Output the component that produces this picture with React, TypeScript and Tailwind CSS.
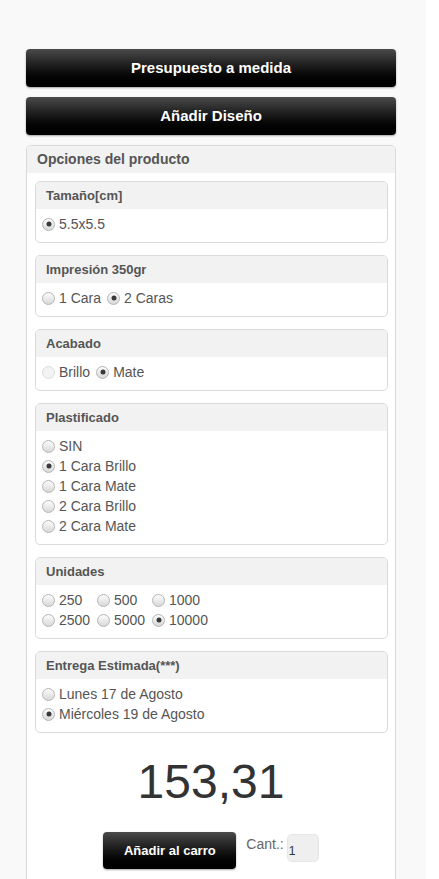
import React from "react";

type Opt = { label: string; checked?: boolean; disabled?: boolean };

function Radio({ checked, disabled }: { checked?: boolean; disabled?: boolean }) {
  return (
    <span
      className={
        "relative inline-block h-[13px] w-[13px] shrink-0 rounded-full border " +
        (disabled
          ? "border-[#dcdcdc] bg-[#f3f3f3]"
          : "border-[#b5b5b5] bg-gradient-to-b from-[#fdfdfd] to-[#d8d8d8]")
      }
    >
      {checked && (
        <span className="absolute left-1/2 top-1/2 h-[5px] w-[5px] -translate-x-1/2 -translate-y-1/2 rounded-full bg-[#3a3a3a]" />
      )}
    </span>
  );
}

function Option({ label, checked, disabled }: Opt) {
  return (
    <label className="flex h-[20px] items-center gap-[4px] text-[14px] text-[#555]">
      <Radio checked={checked} disabled={disabled} />
      <span>{label}</span>
    </label>
  );
}

function Box({ title, children }: { title: string; children: React.ReactNode }) {
  return (
    <div className="overflow-hidden rounded-[5px] border border-[#dadada] bg-white">
      <div className="flex h-[27px] items-center bg-[#f2f2f2] pl-[10px] text-[13px] font-bold text-[#555]">
        {title}
      </div>
      <div className="px-[6px] pb-[8px] pt-[5px]">{children}</div>
    </div>
  );
}

const blackBtn =
  "flex items-center justify-center rounded-[4px] bg-gradient-to-b from-[#4b4b4b] to-[#000] font-bold text-white shadow-[0_1px_2px_rgba(0,0,0,0.35)]";

export default function App() {
  const units: Opt[] = [
    { label: "250" },
    { label: "500" },
    { label: "1000" },
    { label: "2500" },
    { label: "5000" },
    { label: "10000", checked: true },
  ];

  return (
    <div
      className="flex h-[879px] w-[439px] overflow-hidden bg-white"
      style={{ fontFamily: '"Liberation Sans", Arial, sans-serif' }}
    >
      <div className="flex w-[426px] flex-col bg-[#f9f9f9]">
        <div className="mt-[39px] h-px w-[396px] bg-[#ebebeb]" />
        <div className="ml-[26px] flex w-[370px] flex-col gap-[10px] pt-[10px]">
          <button className={blackBtn + " h-[38px] text-[15px]"}>Presupuesto a medida</button>
          <button className={blackBtn + " h-[38px] text-[15px]"}>Añadir Diseño</button>

          <div className="h-[800px] rounded-t-[5px] border border-[#dadada] bg-white">
            <div className="flex h-[27px] items-center rounded-t-[5px] bg-[#f2f2f2] pl-[10px] text-[14px] font-bold text-[#555]">
              Opciones del producto
            </div>
            <div className="flex flex-col gap-[12px] pl-[8px] pr-[7px] pt-[8px]">
              <Box title="Tamaño[cm]">
                <Option label="5.5x5.5" checked />
              </Box>
              <Box title="Impresión 350gr">
                <div className="flex gap-[6px]">
                  <Option label="1 Cara" />
                  <Option label="2 Caras" checked />
                </div>
              </Box>
              <Box title="Acabado">
                <div className="flex gap-[6px]">
                  <Option label="Brillo" disabled />
                  <Option label="Mate" checked />
                </div>
              </Box>
              <Box title="Plastificado">
                <Option label="SIN" />
                <Option label="1 Cara Brillo" checked />
                <Option label="1 Cara Mate" />
                <Option label="2 Cara Brillo" />
                <Option label="2 Cara Mate" />
              </Box>
              <Box title="Unidades">
                <div className="grid grid-cols-[55px_55px_80px]">
                  {units.map((u) => (
                    <Option key={u.label} {...u} />
                  ))}
                </div>
              </Box>
              <Box title="Entrega Estimada(***)">
                <Option label="Lunes 17 de Agosto" />
                <Option label="Miércoles 19 de Agosto" checked />
              </Box>
            </div>

            <div className="mt-[19px] text-center text-[48px] leading-[60px] text-[#333]">153,31</div>

            <div className="mt-[20px] flex items-start justify-center gap-[10px]">
              <button className={blackBtn + " h-[37px] w-[133px] text-[13px]"}>Añadir al carro</button>
              <div className="flex items-start gap-[3px] pt-[2px]">
                <span className="text-[14px] text-[#666]">Cant.:</span>
                <div className="h-[28px] w-[32px] rounded-[5px] border border-[#e6e6e6] bg-[#efefef] pl-[1px] pt-[9px] text-[12px] leading-[14px] text-[#333]">
                  1
                </div>
              </div>
            </div>
          </div>
        </div>
      </div>
    </div>
  );
}
